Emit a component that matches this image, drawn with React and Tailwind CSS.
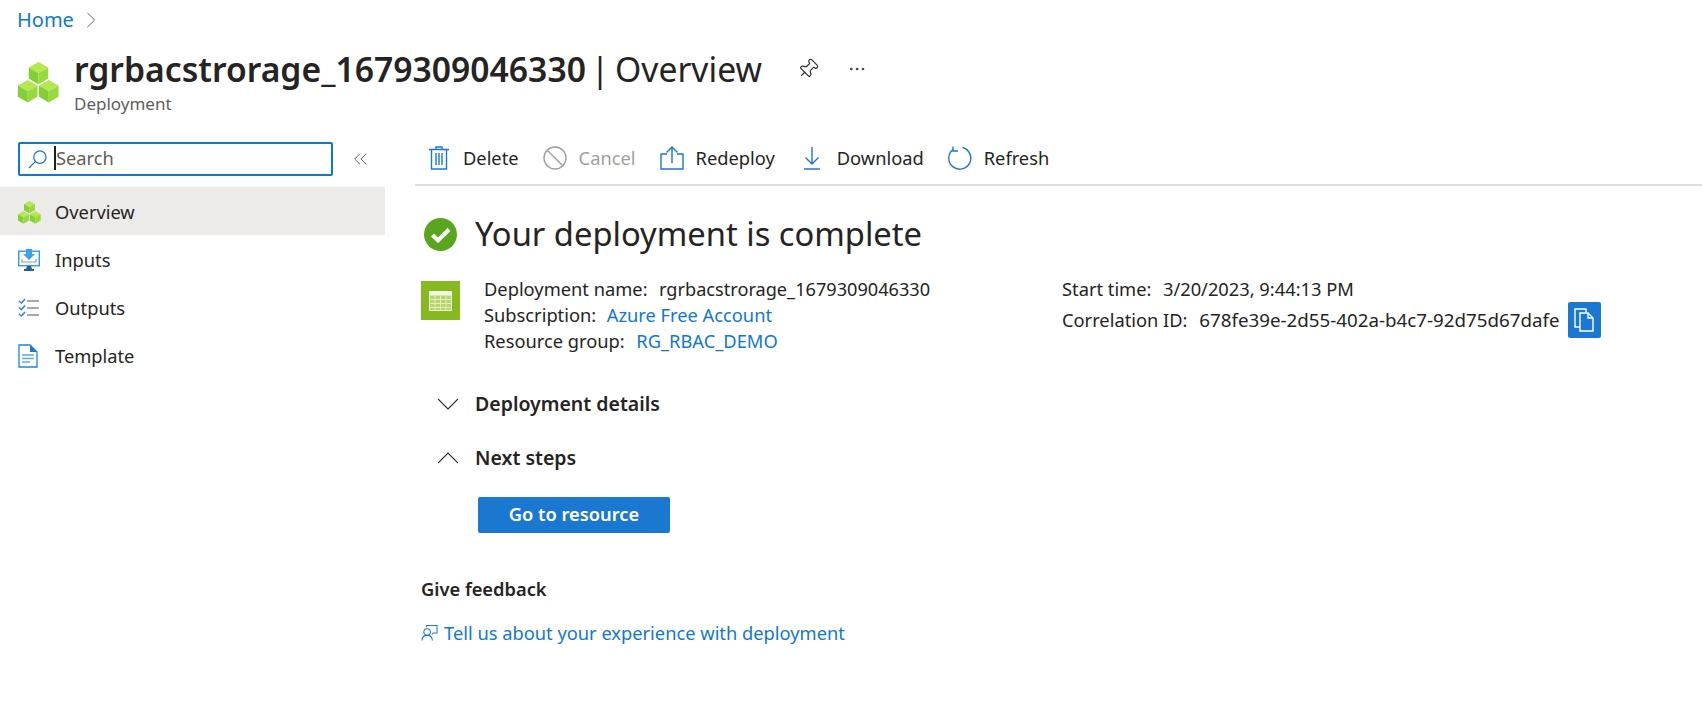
import { Pin, MoreHorizontal } from "lucide-react";

function Cube({ x, y }) {
  // one isometric cube, 20 wide and 22 tall before scaling
  return (
    <g transform={`translate(${x} ${y})`}>
      <path d="M10 0l10 5.6-10 5.8L0 5.6z" fill="#b3e84e" />
      <path d="M0 5.6l10 5.8V23L0 17z" fill="#84cf35" />
      <path d="M20 5.6l-10 5.8V23l10-6z" fill="#98da3e" />
    </g>
  );
}

function Cubes({ className }) {
  return (
    <svg viewBox="0 0 42 42" className={className}>
      <Cube x={11} y={0} />
      <Cube x={0} y={18.5} />
      <Cube x={21.5} y={18.5} />
    </svg>
  );
}

function Chevron({ d, className }) {
  return (
    <svg viewBox="0 0 20 20" className={className} fill="none" stroke="currentColor" strokeWidth="1.1">
      <path d={d} />
    </svg>
  );
}

function InputsIcon() {
  return (
    <svg viewBox="0 0 22 24" className="h-[24px] w-[22px]">
      <rect x="0.7" y="3.2" width="20.6" height="14.5" fill="#fff" stroke="#2b9af3" strokeWidth="1.4" />
      <path d="M8 1h6v5h3l-6 6-6-6h3z" fill="#3aa0f0" />
      <path d="M4 11v3h14v-3" fill="none" stroke="#9a9a9a" strokeWidth="1.2" />
      <path d="M9 18h4l1 3H8z" fill="#1f5fa8" />
      <path d="M6 21h10v2H6z" fill="#1f5fa8" />
    </svg>
  );
}

function OutputsIcon() {
  return (
    <svg viewBox="0 0 22 20" className="h-[20px] w-[22px]" fill="none">
      <path d="M1 3l2.5 2L7 1M1 9.5l2.5 2L7 7.5M1 16l2.5 2L7 14" stroke="#2b88d8" strokeWidth="1.6" />
      <path d="M9 3h12M9 10h12M9 17h12" stroke="#a8a8a8" strokeWidth="2" />
    </svg>
  );
}

function TemplateIcon() {
  return (
    <svg viewBox="0 0 20 24" className="h-[24px] w-[20px]" fill="none">
      <path d="M1 1h11l7 7v15H1z" fill="#fff" stroke="#1b86dc" strokeWidth="1.3" />
      <path d="M12 1l7 7h-7z" fill="#1b78d0" />
      <path d="M4 11h12M4 14.5h12M4 18h8" stroke="#5ea9e6" strokeWidth="1.4" />
    </svg>
  );
}

function TrashIcon() {
  return (
    <svg viewBox="0 0 20 24" className="h-[24px] w-[20px]" fill="none" stroke="#1b78d0" strokeWidth="1.4">
      <path d="M7 3V1h6v2M0 3.5h20" />
      <path d="M2.5 3.5V23h15V3.5" />
      <path d="M7 7v12M10 7v12M13 7v12" />
    </svg>
  );
}

function CancelIcon() {
  return (
    <svg viewBox="0 0 24 24" className="h-[24px] w-[24px]" fill="none" stroke="#a19f9d" strokeWidth="1.4">
      <circle cx="12" cy="12" r="11" />
      <path d="M4.2 4.2l15.6 15.6" />
    </svg>
  );
}

function RedeployIcon() {
  return (
    <svg viewBox="0 0 24 24" className="h-[24px] w-[24px]" fill="none" stroke="#1b78d0" strokeWidth="1.4">
      <path d="M7 8H1v15h22V8h-6" />
      <path d="M12 17V1M6.5 6.5L12 1l5.5 5.5" />
    </svg>
  );
}

function DownloadIcon() {
  return (
    <svg viewBox="0 0 16 24" className="h-[24px] w-[16px]" fill="none" stroke="#1b78d0" strokeWidth="1.4">
      <path d="M8 1v17M1.5 11.5L8 18l6.5-6.5M0 23h16" />
    </svg>
  );
}

function RefreshIcon() {
  return (
    <svg viewBox="0 0 24 24" className="h-[26px] w-[24px]" fill="none" stroke="#1b78d0" strokeWidth="1.4">
      <path d="M14.5 1.5A11 11 0 1 1 5 3.5" />
      <path d="M5 0.5v4.5h5" />
    </svg>
  );
}

function CheckCircleIcon() {
  return (
    <svg viewBox="0 0 33 33" className="h-[33px] w-[33px] shrink-0">
      <circle cx="16.5" cy="16.5" r="16.5" fill="#5aa51e" />
      <path d="M8.5 17l5.5 5.5L25 11.5" fill="none" stroke="#fff" strokeWidth="4" />
    </svg>
  );
}

function GridIcon() {
  return (
    <svg viewBox="0 0 23 20" className="h-[20px] w-[23px]">
      <rect x="0.5" y="0.5" width="22" height="19" fill="#b5d66e" stroke="#f3f9e2" />
      <path d="M0 2.5h23" stroke="#f3f9e2" strokeWidth="4" />
      <path d="M1 8.5h21M1 12.5h21M1 16.5h21M6 5v14M11.5 5v14M17 5v14" stroke="#e6f2c4" strokeWidth="0.9" />
    </svg>
  );
}

function CopyIcon() {
  return (
    <svg viewBox="0 0 20 24" className="h-[24px] w-[20px]" fill="none" stroke="#fff" strokeWidth="1.4">
      <path d="M12 4V1H1v18h5" />
      <path d="M6 5h8l5 5v13H6z" />
      <path d="M14 5v5h5" />
    </svg>
  );
}

function SearchIcon() {
  return (
    <svg viewBox="0 0 20 20" className="h-[19px] w-[19px]" fill="none" stroke="#1b78d0" strokeWidth="1.3">
      <circle cx="12.5" cy="7.5" r="6.5" />
      <path d="M8 12L1 19" />
    </svg>
  );
}

function FeedbackIcon() {
  return (
    <svg viewBox="0 0 18 18" className="h-[18px] w-[17px]" fill="none" stroke="#1b78d0" strokeWidth="1.1">
      <path d="M6 3V1h11v8h-4l-1.5 1.5" />
      <circle cx="6.5" cy="8" r="3.5" />
      <path d="M1 17c0-3.5 2.2-5.5 5.5-5.5s5.5 2 5.5 5.5" />
    </svg>
  );
}

const navItems = [
  { label: "Overview", icon: <Cubes className="h-[23px] w-[23px]" />, active: true },
  { label: "Inputs", icon: <InputsIcon /> },
  { label: "Outputs", icon: <OutputsIcon /> },
  { label: "Template", icon: <TemplateIcon /> },
];

const toolbarItems = [
  { label: "Delete", icon: <TrashIcon />, className: "ml-[14px] gap-[14px]" },
  { label: "Cancel", icon: <CancelIcon />, className: "ml-[24px] gap-[12px]", disabled: true },
  { label: "Redeploy", icon: <RedeployIcon />, className: "ml-[24px] gap-[12px]" },
  { label: "Download", icon: <DownloadIcon />, className: "ml-[29px] gap-[17px]" },
  { label: "Refresh", icon: <RefreshIcon />, className: "ml-[24px] gap-[12px]" },
];

export default function App() {
  return (
    <div className="h-[702px] w-[1702px] overflow-hidden bg-white text-[18.3px] text-[#252423] font-['Noto_Sans',sans-serif]">
      <div className="flex h-[40px] items-center gap-[8px] pl-[17px] text-[20px]">
        <a className="text-[#0f78d4]">Home</a>
        <Chevron d="M6 2l8 8-8 8" className="h-[18px] w-[18px] text-[#605e5c]" />
      </div>

      <div className="flex h-[84px] items-start pl-[18px] pt-[5px]">
        <Cubes className="mt-[17px] h-[41px] w-[41px]" />
        <div className="ml-[15px]">
          <div className="flex items-center">
            <h1 className="text-[33.7px] leading-[48px]">
              <span className="font-semibold">rgrbacstrorage_1679309046330</span> <span className="-ml-[4px]">|</span> <span className="-ml-[3px]">Overview</span>
            </h1>
            <Pin size={22} strokeWidth={1.2} className="ml-[35px] rotate-45" />
            <MoreHorizontal size={20} strokeWidth={1.2} className="ml-[28px]" />
          </div>
          <div className="text-[17px] leading-[22px] text-[#605e5c]">Deployment</div>
        </div>
      </div>

      <div className="flex">
        <aside className="w-[385px] shrink-0 pt-[18px]">
          <div className="flex items-center pl-[18px]">
            <div className="flex h-[34px] w-[315px] items-center gap-[7px] rounded-[2px] border-2 border-[#0f78d4] pl-[8px]">
              <SearchIcon />
              <span className="-mt-[2px] border-l-2 border-[#201f1e] leading-[24px] text-[#605e5c]">Search</span>
            </div>
            <Chevron d="M9 4l-6 6 6 6M16 4l-6 6 6 6" className="ml-[19px] h-[18px] w-[18px] text-[#605e5c]" />
          </div>
          <nav className="mt-[11px]">
            {navItems.map((item) => (
              <div key={item.label} className={`flex h-[48px] items-center pl-[18px] pt-[2px] ${item.active ? "bg-[#edebe9]" : ""}`}>
                <span className="flex w-[37px] justify-start">{item.icon}</span>
                {item.label}
              </div>
            ))}
          </nav>
        </aside>

        <main className="ml-[30px] flex-1">
          <div className="flex h-[62px] items-center border-b-2 border-[#e1dfdd] pt-[8px]">
            {toolbarItems.map((item) => (
              <button key={item.label} className={`flex items-center ${item.className} ${item.disabled ? "text-[#a19f9d]" : ""}`}>
                {item.icon}
                {item.label}
              </button>
            ))}
          </div>

          <div className="mt-[27px] flex items-center pl-[9px]">
            <CheckCircleIcon />
            <h2 className="ml-[18px] text-[32.7px] leading-[42px]">Your deployment is complete</h2>
          </div>

          <div className="mt-[26px] flex items-start leading-[26px]">
            <div className="ml-[6px] flex h-[39px] w-[39px] shrink-0 items-center justify-center bg-[#86b91f]">
              <GridIcon />
            </div>
            <div className="-mt-[5px] ml-[24px] w-[578px]">
              <div>Deployment name:&nbsp; <span className="ml-[2px] text-[18.15px]">rgrbacstrorage_1679309046330</span></div>
              <div>Subscription:&nbsp; <a className="ml-[1px] text-[#0f78d4]">Azure Free Account</a></div>
              <div>Resource group:&nbsp; <a className="ml-[2px] text-[#0f78d4]">RG_RBAC_DEMO</a></div>
            </div>
            <div className="-mt-[5px]">
              <div>Start time:&nbsp; <span className="ml-[2px]">3/20/2023, 9:44:13 PM</span></div>
              <div className="flex items-center">
                Correlation ID:&nbsp;<span className="ml-[7px] text-[18.75px]">678fe39e-2d55-402a-b4c7-92d75d67dafe</span>
                <span className="ml-[8px] flex h-[36px] w-[33px] items-center justify-center rounded-[2px] bg-[#1b78d0]">
                  <CopyIcon />
                </span>
              </div>
            </div>
          </div>

          <div className="mt-[36px] flex items-center pl-[23px] text-[19.5px] font-semibold leading-[28px]">
            <Chevron d="M0 5l10 10 10-10" className="mr-[17px] h-[20px] w-[20px]" />
            Deployment details
          </div>
          <div className="mt-[26px] flex items-center pl-[23px] text-[19.5px] font-semibold leading-[28px]">
            <Chevron d="M0 15L10 5l10 10" className="mr-[17px] h-[20px] w-[20px]" />
            Next steps
          </div>
          <button className="ml-[63px] mt-[25px] flex h-[36px] w-[192px] items-center justify-center rounded-[2px] bg-[#1b78d0] pb-[2px] font-semibold text-white">
            Go to resource
          </button>

          <div className="ml-[6px] mt-[43px] font-semibold leading-[26px]">Give feedback</div>
          <div className="ml-[6px] mt-[18px] flex items-center gap-[6px] leading-[26px] text-[#0f78d4]">
            <FeedbackIcon />
            Tell us about your experience with deployment
          </div>
        </main>
      </div>
    </div>
  );
}
